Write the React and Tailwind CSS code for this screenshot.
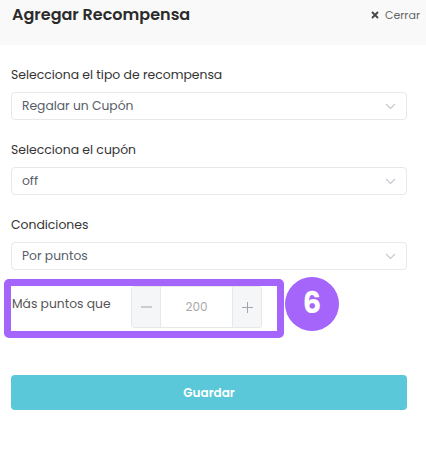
import React from "react";

const Chevron = () => (
  <svg width="11" height="7" viewBox="0 0 11 7" fill="none" className="shrink-0">
    <path d="M1 1l4.5 4.5L10 1" stroke="#c4c8ce" strokeWidth="1.1" />
  </svg>
);

const Select = ({ value }) => (
  <div className="flex h-[28px] items-center justify-between rounded-[4px] border border-[#e6e8ec] bg-white pl-[10px] pr-[10px]">
    <span className="text-[12.3px] text-[#565d68]">{value}</span>
    <Chevron />
  </div>
);

const Label = ({ children }) => (
  <div className="mb-[8px] h-[18px] text-[12.4px] leading-[18px] text-[#333]">{children}</div>
);

export default function App() {
  return (
    <div
      className="relative h-[463px] w-full bg-white"
      style={{ fontFamily: "Poppins, Inter, 'Noto Sans', sans-serif" }}
    >
      <div className="flex h-[45px] items-start justify-between bg-[#f9f9f9] pl-[12px] pr-[6px] pt-[4px]">
        <h1 className="text-[16px] font-semibold leading-[22px] text-[#2b2b2b]">Agregar Recompensa</h1>
        <button className="flex items-center gap-[6px] pt-[1px] text-[11px] leading-[20px] text-[#666]">
          <svg width="8" height="8" viewBox="0 0 8 8">
            <path d="M1 1l6 6M7 1l-6 6" stroke="#444" strokeWidth="1.8" />
          </svg>
          Cerrar
        </button>
      </div>

      <div className="pl-[11px] pr-[19px] pt-[21px]">
        <Label>Selecciona el tipo de recompensa</Label>
        <Select value="Regalar un Cupón" />
        <div className="h-[21px]" />
        <Label>Selecciona el cupón</Label>
        <Select value="off" />
        <div className="h-[21px]" />
        <Label>Condiciones</Label>
        <Select value="Por puntos" />

        <div className="relative mt-[16px] flex h-[42px] items-center">
          <span className="w-[120px] pl-[1px] pb-[5px] text-[12.3px] text-[#555]">Más puntos que</span>
          <div className="flex h-[42px] w-[131px] overflow-hidden rounded-[3px] border border-[#e6e8ec]">
            <div className="flex w-[28px] items-center justify-center bg-[#f5f6f8] text-[#9aa0a8]">
              <svg width="11" height="2" viewBox="0 0 11 2"><path d="M0 1h11" stroke="#a0a5ad" strokeWidth="1" /></svg>
            </div>
            <div className="flex flex-1 items-center justify-center border-x border-[#e6e8ec] text-[12px] text-[#aaa]">200</div>
            <div className="flex w-[28px] items-center justify-center bg-[#f5f6f8]">
              <svg width="11" height="11" viewBox="0 0 11 11"><path d="M0 5.5h11M5.5 0v11" stroke="#a0a5ad" strokeWidth="1" /></svg>
            </div>
          </div>
          <div className="pointer-events-none absolute left-[-7px] top-[-7px] h-[59px] w-[280px] rounded-[5px] border-[7px] border-[#a564fa]" />
          <div className="absolute left-[274px] top-[-9px] flex h-[54px] w-[54px] items-center justify-center rounded-full bg-[#a564fa] text-[29px] font-bold text-white">
            6
          </div>
        </div>

        <button className="mt-[47px] flex h-[35px] w-full items-center justify-center rounded-[4px] bg-[#5ac8d8] text-[12px] font-semibold text-white">
          Guardar
        </button>
      </div>
    </div>
  );
}
